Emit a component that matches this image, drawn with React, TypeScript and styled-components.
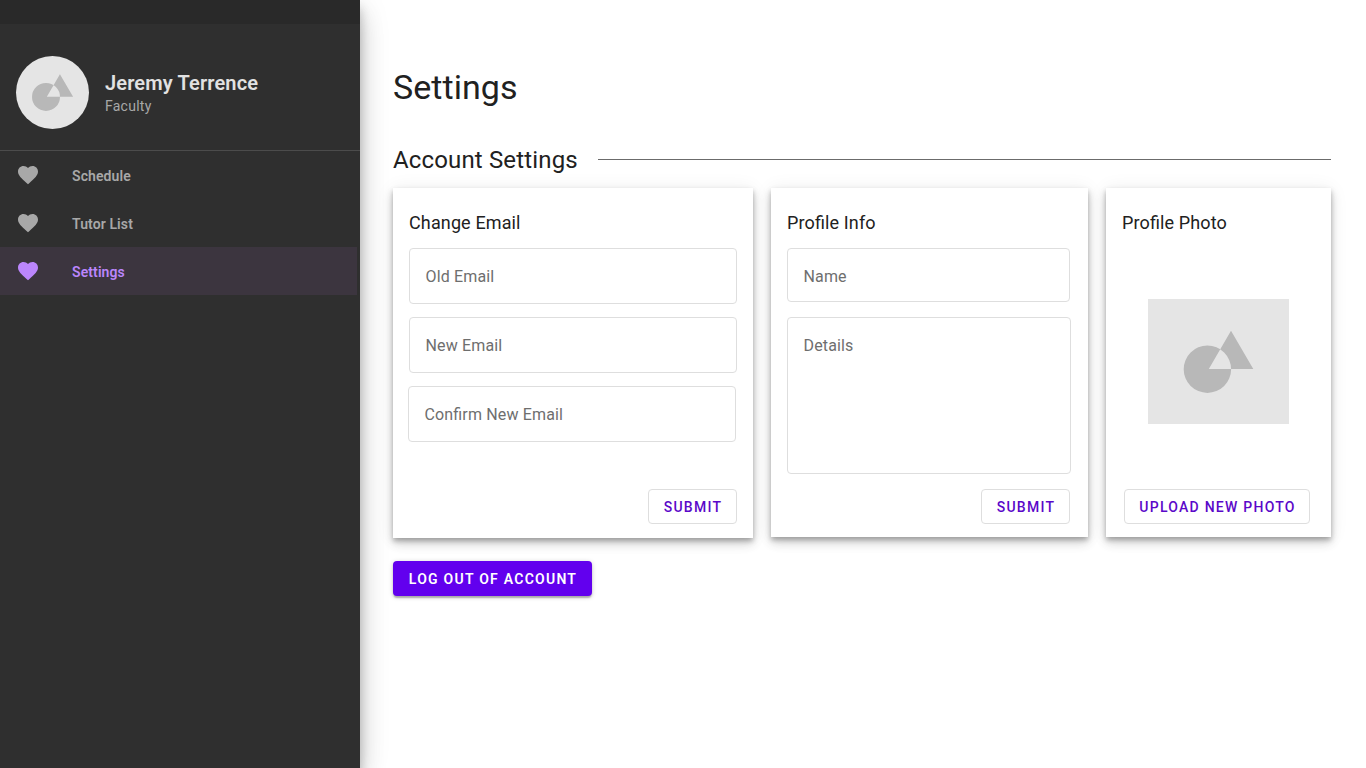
import React from 'react';
import styled, { createGlobalStyle } from 'styled-components';

const GlobalStyle = createGlobalStyle`
  *, *::before, *::after { box-sizing: border-box; }
  body {
    margin: 0;
    background: #fff;
    font-family: Roboto, "Liberation Sans", sans-serif;
    color: #212121;
    overflow: hidden;
  }
  h1, h2, h3, p { margin: 0; font-weight: 400; }
  button { font-family: inherit; }
`;

const Page = styled.div`
  display: flex;
  height: 768px;
`;

const Sidebar = styled.aside`
  flex: 0 0 360px;
  background: #2f2f2f;
  box-shadow: 0 8px 10px rgba(0, 0, 0, 0.2), 0 6px 30px rgba(0, 0, 0, 0.12),
    0 16px 24px rgba(0, 0, 0, 0.14);
`;

const StatusBar = styled.div`
  height: 24px;
  background: #292929;
`;

const Account = styled.header`
  display: flex;
  height: 127px;
  padding: 32px 16px 0;
  gap: 16px;
  border-bottom: 1px solid #4c4c4c;
`;

const Avatar = styled.div`
  width: 73px;
  height: 73px;
  border-radius: 50%;
  overflow: hidden;
  background: #e5e5e5;
`;

const Identity = styled.div`
  padding-top: 15px;
`;

const UserName = styled.p`
  font-size: 20px;
  line-height: 24px;
  font-weight: 600;
  letter-spacing: 0.15px;
  color: #e2e2e2;
`;

const Role = styled.p`
  font-size: 14px;
  line-height: 20px;
  letter-spacing: 0.25px;
  padding-top: 1px;
  color: #a8a8a8;
`;

const NavItem = styled.a<{ $active?: boolean }>`
  display: flex;
  align-items: center;
  gap: 32px;
  width: 357px;
  height: 48px;
  padding: 0 16px;
  font-size: 14px;
  line-height: 20px;
  font-weight: 600;
  letter-spacing: 0.1px;
  color: ${(p) => (p.$active ? '#bb86fc' : '#a8a8a8')};
  background: ${(p) => (p.$active ? '#3c353f' : 'transparent')};

  span { padding-top: 2px; }
`;

const Main = styled.main`
  flex: 1;
  padding: 67px 35px 0 33px;
`;

const Title = styled.h1`
  font-size: 34px;
  line-height: 40px;
  letter-spacing: 0.05px;
`;

const SectionHeader = styled.div`
  display: flex;
  align-items: center;
  gap: 20px;
  margin-top: 37px;
  height: 32px;
`;

const SectionTitle = styled.h2`
  width: 184.5px;
  white-space: nowrap;
  font-size: 24px;
  line-height: 32px;
  letter-spacing: 0.15px;
`;

const Rule = styled.div`
  flex: 1;
  height: 1px;
  background: #6b6b6b;
  margin-top: -1px;
`;

const Cards = styled.div`
  display: flex;
  align-items: flex-start;
  gap: 18px;
  margin-top: 12px;
`;

const Card = styled.section<{ $width: number; $height?: number }>`
  display: flex;
  flex-direction: column;
  width: ${(p) => p.$width}px;
  height: ${(p) => p.$height ?? 349}px;
  padding: 23px 16px 0;
  background: #fff;
  box-shadow: 0 3px 5px rgba(0, 0, 0, 0.27), 0 1px 18px rgba(0, 0, 0, 0.07),
    0 6px 10px rgba(0, 0, 0, 0.14);
`;

const CardTitle = styled.h3`
  font-size: 18px;
  line-height: 24px;
  letter-spacing: 0.13px;
  font-feature-settings: "liga" 1;
  margin-bottom: 13px;
`;

const Field = styled.div<{ $width?: number; $height?: number; $shift?: number; $gap?: number }>`
  width: ${(p) => p.$width ?? 328}px;
  height: ${(p) => p.$height ?? 56}px;
  flex: none;
  margin: 0 0 ${(p) => p.$gap ?? 13}px ${(p) => p.$shift ?? 0}px;
  padding: 16px 15.5px;
  border: 1px solid #dedede;
  border-radius: 4px;
  font-size: 16px;
  line-height: 24px;
  letter-spacing: 0.15px;
  font-feature-settings: "liga" 1;
  color: #6e6e6e;
`;

const Button = styled.button<{ $width: number; $primary?: boolean }>`
  width: ${(p) => p.$width}px;
  height: 35px;
  padding: 1px 0 0 1px;
  border: ${(p) => (p.$primary ? '0' : '1px solid #dedede')};
  border-radius: 4px;
  background: ${(p) => (p.$primary ? '#6200ee' : '#fff')};
  color: ${(p) => (p.$primary ? '#fff' : '#5b08c9')};
  font-size: 14px;
  line-height: 16px;
  font-weight: ${(p) => (p.$primary ? 600 : 500)};
  letter-spacing: 1.25px;
  white-space: nowrap;
  text-transform: uppercase;
  box-shadow: ${(p) =>
    p.$primary
      ? '0 1px 5px rgba(0,0,0,.2), 0 3px 1px -1px rgba(0,0,0,.12), 0 2px 2px rgba(0,0,0,.14)'
      : 'none'};
`;

const Actions = styled.div<{ $inset?: number }>`
  display: flex;
  justify-content: flex-end;
  margin: auto 0 ${(p) => (p.$inset ? 13 : 14)}px;
  padding-right: ${(p) => p.$inset ?? 0}px;
`;

const Photo = styled.div`
  width: 141px;
  height: 125px;
  margin: 51px 0 0 26px;
  background: #e5e5e5;
`;

const Logout = styled.div`
  margin-top: 23px;
`;

const Shapes = ({ viewBox }: { viewBox: string }) => (
  <svg width="100%" height="100%" viewBox={viewBox} display="block">
    <path
      fill="#b8b8b8"
      fillRule="evenodd"
      d="M35.7 70.2a23.7 23.7 0 1 0 47.4 0a23.7 23.7 0 1 0 -47.4 0ZM83 31.8L105.3 70H60.8Z"
    />
  </svg>
);

const Heart = () => (
  <svg width="24" height="24" viewBox="0 0 24 24" fill="currentColor">
    <path d="M12 21.35l-1.45-1.32C5.4 15.36 2 12.28 2 8.5 2 5.42 4.42 3 7.5 3c1.74 0 3.41.81 4.5 2.09C13.09 3.81 14.76 3 16.5 3 19.58 3 22 5.42 22 8.5c0 3.78-3.4 6.86-8.55 11.54L12 21.35z" />
  </svg>
);

export default function App() {
  return (
    <Page>
      <GlobalStyle />
      <Sidebar>
        <StatusBar />
        <Account>
          <Avatar>
            <Shapes viewBox="8.56 0.85 123.7 123.7" />
          </Avatar>
          <Identity>
            <UserName>Jeremy Terrence</UserName>
            <Role>Faculty</Role>
          </Identity>
        </Account>
        <nav>
          <NavItem><Heart /><span>Schedule</span></NavItem>
          <NavItem><Heart /><span>Tutor List</span></NavItem>
          <NavItem $active><Heart /><span>Settings</span></NavItem>
        </nav>
      </Sidebar>
      <Main>
        <Title>Settings</Title>
        <SectionHeader>
          <SectionTitle>Account Settings</SectionTitle>
          <Rule />
        </SectionHeader>
        <Cards>
          <Card $width={360} $height={350}>
            <CardTitle>Change Email</CardTitle>
            <Field>Old Email</Field>
            <Field>New Email</Field>
            <Field $shift={-1}>Confirm New Email</Field>
            <Actions><Button $width={89}>Submit</Button></Actions>
          </Card>
          <Card $width={317}>
            <CardTitle>Profile Info</CardTitle>
            <Field $width={283} $height={54} $gap={15}>Name</Field>
            <Field $width={284} $height={157}>Details</Field>
            <Actions $inset={2}><Button $width={89}>Submit</Button></Actions>
          </Card>
          <Card $width={225}>
            <CardTitle>Profile Photo</CardTitle>
            <Photo><Shapes viewBox="0 0 141 125" /></Photo>
            <Actions $inset={5}><Button $width={186}>Upload new photo</Button></Actions>
          </Card>
        </Cards>
        <Logout><Button $primary $width={199}>Log out of account</Button></Logout>
      </Main>
    </Page>
  );
}
